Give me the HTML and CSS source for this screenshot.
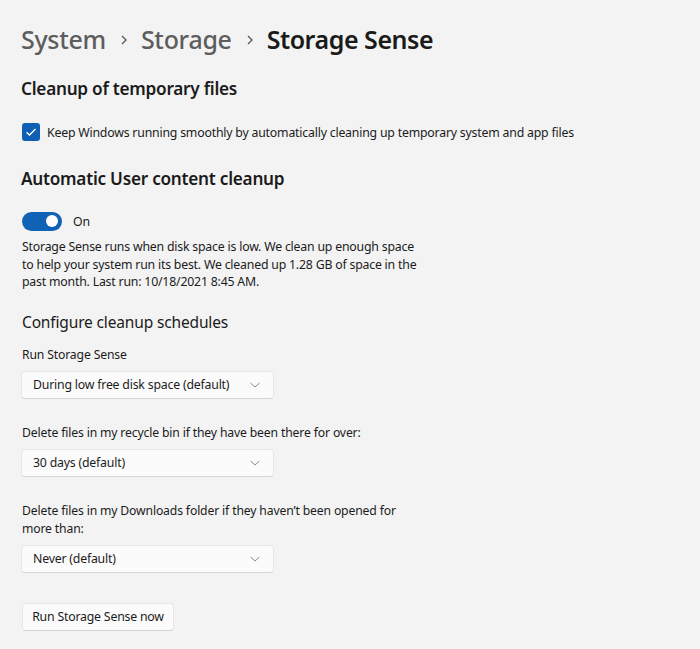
FILE: index.html
```html
<!DOCTYPE html>
<html lang="en">
<head>
<meta charset="utf-8">
<title>Storage Sense</title>
<link rel="stylesheet" href="styles.css">
</head>
<body>
<main class="page">
  <nav class="breadcrumb">
    <span class="crumb">System</span>
    <span class="sep"><svg width="10" height="12" viewBox="0 0 10 12"><path d="M3 2 L7 6 L3 10" fill="none" stroke="#5c5c5c" stroke-width="1.4"/></svg></span>
    <span class="crumb">Storage</span>
    <span class="sep"><svg width="10" height="12" viewBox="0 0 10 12"><path d="M3 2 L7 6 L3 10" fill="none" stroke="#5c5c5c" stroke-width="1.4"/></svg></span>
    <span class="crumb current">Storage Sense</span>
  </nav>

  <h2 class="section-title first">Cleanup of temporary files</h2>
  <label class="check-row">
    <span class="checkbox"><svg width="12" height="10" viewBox="0 0 12 10"><path d="M1.5 5.2 L4.5 8 L10.5 2" fill="none" stroke="#fff" stroke-width="1.3"/></svg></span>
    <span class="check-text">Keep Windows running smoothly by automatically cleaning up temporary system and app files</span>
  </label>

  <h2 class="section-title second">Automatic User content cleanup</h2>
  <div class="toggle-row">
    <span class="toggle"><span class="thumb"></span></span>
    <span class="toggle-label">On</span>
  </div>
  <p class="desc">Storage Sense runs when disk space is low. We clean up enough space to help your system run its best. We cleaned up 1.28 GB of space in the past month. Last run: 10/18/2021 8:45 AM.</p>

  <h3 class="subtitle">Configure cleanup schedules</h3>

  <div class="field">
    <div class="label">Run Storage Sense</div>
    <div class="select"><span>During low free disk space (default)</span><svg class="chev" width="12" height="8" viewBox="0 0 12 8"><path d="M1.5 2 L6 6 L10.5 2" fill="none" stroke="#8a8a8a" stroke-width="1"/></svg></div>
  </div>

  <div class="field">
    <div class="label">Delete files in my recycle bin if they have been there for over:</div>
    <div class="select"><span>30 days (default)</span><svg class="chev" width="12" height="8" viewBox="0 0 12 8"><path d="M1.5 2 L6 6 L10.5 2" fill="none" stroke="#8a8a8a" stroke-width="1"/></svg></div>
  </div>

  <div class="field">
    <div class="label wrap">Delete files in my Downloads folder if they haven’t been opened for more than:</div>
    <div class="select"><span>Never (default)</span><svg class="chev" width="12" height="8" viewBox="0 0 12 8"><path d="M1.5 2 L6 6 L10.5 2" fill="none" stroke="#8a8a8a" stroke-width="1"/></svg></div>
  </div>

  <button class="btn">Run Storage Sense now</button>
</main>
</body>
</html>
```

FILE: styles.css
```css
html, body {
  margin: 0;
  padding: 0;
  background: #f3f3f3;
}
body {
  font-family: "Noto Sans", "Open Sans", "DejaVu Sans", sans-serif;
  color: #1b1b1b;
}
.page {
  padding: 21px 0 0 21px;
}
.breadcrumb {
  display: flex;
  align-items: center;
  height: 36px;
  font-size: 25px;
  letter-spacing: -0.3px;
  line-height: 36px;
}
.crumb {
  color: #5d5d5d;
  font-weight: 500;
}
.crumb.current {
  color: #1a1a1a;
  font-weight: 600;
  letter-spacing: -0.45px;
}
.sep {
  display: flex;
  align-items: center;
  margin: 2px 12px 0 13px;
}
.section-title {
  margin: 0;
  font-size: 17.2px;
  font-weight: 600;
  line-height: 24px;
  letter-spacing: -0.25px;
}
.section-title.first { margin-top: 20px; }
.section-title.second { margin-top: 25px; }
.check-row {
  display: flex;
  align-items: center;
  margin-top: 21px;
  height: 20px;
}
.checkbox {
  width: 18px;
  height: 18px;
  border-radius: 3px;
  background: #0f5fb5;
  display: flex;
  align-items: center;
  justify-content: center;
  margin-left: 1px;
}
.check-text {
  margin-left: 7px;
  font-size: 12.3px;
  letter-spacing: -0.2px;
}
.toggle-row {
  display: flex;
  align-items: center;
  margin-top: 20px;
  height: 20px;
}
.toggle {
  width: 40px;
  height: 19px;
  border-radius: 10px;
  background: #0f62b5;
  margin-left: 1px;
  display: flex;
  align-items: center;
  justify-content: flex-end;
  box-sizing: border-box;
  padding-right: 4px;
}
.thumb {
  width: 12px;
  height: 12px;
  border-radius: 50%;
  background: #fff;
}
.toggle-label {
  margin-left: 11px;
  font-size: 12.3px;
}
.desc {
  margin: 7px 0 0 1px;
  width: 400px;
  font-size: 12.3px;
  line-height: 17.5px;
  letter-spacing: -0.2px;
}
.subtitle {
  margin: 20px 0 0 1px;
  font-size: 15.5px;
  font-weight: 400;
  line-height: 22px;
  letter-spacing: -0.15px;
}
.field {
  margin-top: 25px;
}
.subtitle + .field {
  margin-top: 13px;
}
.label {
  margin-left: 1px;
  font-size: 12.2px;
  line-height: 18px;
  letter-spacing: -0.15px;
}
.label.wrap {
  width: 385px;
}
.select {
  margin-top: 7px;
  width: 253px;
  height: 28px;
  box-sizing: border-box;
  background: #fbfbfb;
  border: 1px solid #e6e6e6;
  border-bottom-color: #d6d6d6;
  border-radius: 4px;
  display: flex;
  align-items: center;
  justify-content: space-between;
  padding: 0 12px 0 11px;
  font-size: 12.3px;
  letter-spacing: -0.2px;
}
.chev {
  display: block;
}
.btn {
  margin-top: 30px;
  margin-left: 1px;
  height: 28px;
  width: 152px;
  box-sizing: border-box;
  background: #fbfbfb;
  border: 1px solid #e6e6e6;
  border-bottom-color: #d4d4d4;
  border-radius: 4px;
  font-family: inherit;
  font-size: 12.3px;
  letter-spacing: -0.2px;
  color: #1b1b1b;
  padding: 0;
}
```
